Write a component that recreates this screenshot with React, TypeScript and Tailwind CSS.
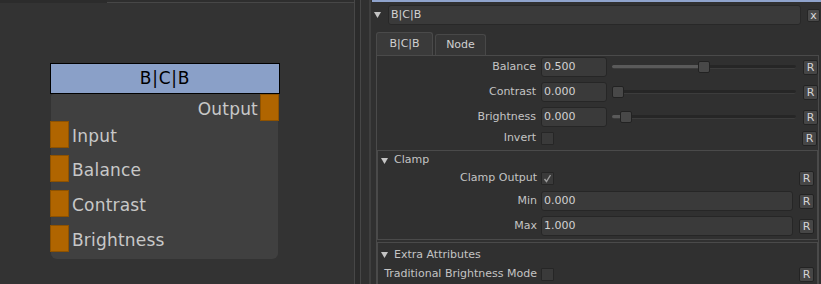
import React from "react";

const Tri = () => (
  <svg width="7" height="6" viewBox="0 0 7 6" className="shrink-0">
    <polygon points="0,0 7,0 3.5,6" fill="#c4c4c4" />
  </svg>
);

const RBtn = () => (
  <div className="w-[15px] h-[15px] shrink-0 rounded-[2px] bg-[#464646] border border-[#232323] flex items-center justify-center text-[11px] leading-none text-[#d4d4d4]">
    R
  </div>
);

const Field = ({ value, w }: { value: string; w: string }) => (
  <div
    className={`${w} h-[20px] shrink-0 bg-[#3a3a3a] border border-[#262626] rounded-[3px] flex items-center pl-[2px] text-[11px] text-[#d2d2d2]`}
  >
    {value}
  </div>
);

const Check = ({ checked = false }: { checked?: boolean }) => (
  <div className="w-[13px] h-[13px] shrink-0 bg-[#3a3a3a] border border-[#262626] rounded-[1px] flex items-center justify-center">
    {checked && (
      <svg width="9" height="9" viewBox="0 0 9 9">
        <path d="M1.5 5 L3.5 7.5 L7.5 1" stroke="#9c9c9c" strokeWidth="1.4" fill="none" />
      </svg>
    )}
  </div>
);

const Slider = ({ pos }: { pos: number }) => (
  <div className="relative w-[184px] h-[12px] ml-[5px] shrink-0">
    <div className="absolute left-0 right-0 top-[4px] h-[4px] rounded-full bg-[#262626] border-b border-[#3c3c3c]" />
    <div className="absolute left-0 top-[4px] h-[3px] rounded-l-full bg-[#5a5a5a]" style={{ width: pos }} />
    <div
      className="absolute top-0 w-[12px] h-[12px] rounded-[2px] bg-[#484848] border border-[#222222]"
      style={{ left: pos }}
    />
  </div>
);

const SliderRow = ({ label, value, pos, mt }: { label: string; value: string; pos: number; mt: string }) => (
  <div className={`flex items-center h-[20px] ${mt}`}>
    <div className="w-[159px] text-right text-[11px] text-[#c4c4c4] shrink-0">{label}</div>
    <div className="ml-[5px]">
      <Field value={value} w="w-[66px]" />
    </div>
    <Slider pos={pos} />
    <div className="ml-[7px]">
      <RBtn />
    </div>
  </div>
);

const Port = ({ extra = "" }: { extra?: string }) => (
  <div className={`w-[19px] h-[27px] shrink-0 bg-[#b06500] border border-[#8e5200] ${extra}`} />
);

const InRow = ({ label, mt }: { label: string; mt: string }) => (
  <div className={`flex items-center h-[27px] ${mt}`}>
    <Port extra="-ml-[1px]" />
    <span className="ml-[3px] pt-[4px] text-[17px] tracking-[0.2px] text-[#c8c8c8] leading-none">{label}</span>
  </div>
);

export default function App() {
  return (
    <div className="w-[821px] h-[284px] flex overflow-hidden bg-[#333333] font-['DejaVu_Sans',sans-serif]">
      {/* Node graph canvas */}
      <div className="w-[354px] h-full shrink-0 relative bg-[#333333] flex flex-col">
        <div className="flex h-[3px] shrink-0">
          <div className="w-[107px] bg-[#2c2c2c]" />
          <div className="flex-1 bg-[#2e2e2e] border-b border-[#474747]" />
        </div>
        <div className="absolute left-[50px] top-[63px] w-[230px] flex flex-col">
          <div className="h-[31px] bg-[#8aa0c8] border border-black flex items-center justify-center text-[17px] tracking-[0.8px] text-black">
            B|C|B
          </div>
          <div className="ml-[1px] w-[227px] h-[165px] bg-[#404040] rounded-b-[6px] rounded-t-[3px] flex flex-col">
            <div className="flex items-center justify-end h-[27px]">
              <span className="pt-[3px] text-[17px] tracking-[0.2px] text-[#c8c8c8] leading-none">Output</span>
              <Port extra="ml-[2px] -mr-[1px]" />
            </div>
            <InRow label="Input" mt="mt-0" />
            <InRow label="Balance" mt="mt-[7px]" />
            <InRow label="Contrast" mt="mt-[8px]" />
            <InRow label="Brightness" mt="mt-[8px]" />
          </div>
        </div>
      </div>

      {/* Divider */}
      <div className="w-[1px] h-full bg-[#474747] shrink-0" />
      <div className="w-[5px] h-full bg-[#2b2b2b] shrink-0" />
      <div className="w-[1px] h-full bg-[#474747] shrink-0" />
      <div className="w-[8px] h-full bg-[#303030] shrink-0" />
      <div className="w-[2px] h-full bg-[#3f3f3f] shrink-0" />

      {/* Properties panel */}
      <div className="flex-1 h-full bg-[#303030] flex flex-col">
        <div className="h-[2px] ml-[1px] bg-[#8fa3cc] shrink-0" />
        <div className="flex items-center mt-[3px] h-[20px] pl-[3px] shrink-0">
          <Tri />
          <div className="ml-[7px] w-[413px] h-[20px] bg-[#3a3a3a] border border-[#282828] rounded-[3px] flex items-center pl-[2px] text-[11px] text-[#d2d2d2]">
            B|C|B
          </div>
          <div className="ml-[6px] w-[13px] h-[13px] bg-[#4a4a4a] border border-[#262626] rounded-[2px] flex items-center justify-center text-[11px] leading-none text-[#dcdcdc]">
            x
          </div>
        </div>

        {/* Tabs */}
        <div className="flex items-end mt-[7px] ml-[5px] h-[23px] shrink-0">
          <div className="w-[57px] h-[23px] bg-[#3a3a3a] border border-b-0 border-[#4a4a4a] rounded-t-[3px] flex items-center justify-center text-[11px] text-[#d0d0d0]">
            B|C|B
          </div>
          <div className="ml-[2px] w-[51px] h-[21px] bg-[#363636] border border-b-0 border-[#484848] rounded-t-[3px] flex items-center justify-center text-[11px] text-[#d0d0d0]">
            Node
          </div>
        </div>

        {/* Tab content frame */}
        <div className="ml-[5px] w-[443px] flex-1 border border-b-0 border-[#4a4a4a] flex flex-col">
          <SliderRow label="Balance" value="0.500" pos={86} mt="mt-[1px]" />
          <SliderRow label="Contrast" value="0.000" pos={0} mt="mt-[5px]" />
          <SliderRow label="Brightness" value="0.000" pos={8} mt="mt-[5px]" />
          <div className="flex items-center h-[15px] mt-[4px]">
            <div className="w-[159px] text-right text-[11px] text-[#c4c4c4] shrink-0">Invert</div>
            <div className="ml-[5px]">
              <Check />
            </div>
            <div className="ml-auto mr-[1px]">
              <RBtn />
            </div>
          </div>

          {/* Clamp group */}
          <div className="mt-[4px] border border-[#4a4a4a] pb-[3px] flex flex-col">
            <div className="flex items-center h-[19px] pl-[3px]">
              <Tri />
              <span className="ml-[6px] text-[11px] text-[#c4c4c4]">Clamp</span>
            </div>
            <div className="flex items-center h-[14px] mt-[1px]">
              <div className="w-[159px] text-right text-[11px] text-[#c4c4c4] shrink-0">Clamp Output</div>
              <div className="ml-[4px]">
                <Check checked />
              </div>
              <div className="ml-auto mr-[3px]">
                <RBtn />
              </div>
            </div>
            <div className="flex items-center h-[20px] mt-[6px]">
              <div className="w-[159px] text-right text-[11px] text-[#c4c4c4] shrink-0">Min</div>
              <div className="ml-[4px]">
                <Field value="0.000" w="w-[252px]" />
              </div>
              <div className="ml-[6px]">
                <RBtn />
              </div>
            </div>
            <div className="flex items-center h-[20px] mt-[5px]">
              <div className="w-[159px] text-right text-[11px] text-[#c4c4c4] shrink-0">Max</div>
              <div className="ml-[4px]">
                <Field value="1.000" w="w-[252px]" />
              </div>
              <div className="ml-[6px]">
                <RBtn />
              </div>
            </div>
          </div>

          {/* Extra Attributes group */}
          <div className="mt-[2px] flex-1 border border-b-0 border-[#4a4a4a] flex flex-col">
            <div className="flex items-center h-[21px] pt-[3px] pl-[3px]">
              <Tri />
              <span className="ml-[6px] text-[11px] text-[#c4c4c4]">Extra Attributes</span>
            </div>
            <div className="flex items-center h-[15px] mt-[3px]">
              <div className="w-[159px] text-right text-[11px] text-[#c4c4c4] shrink-0 whitespace-nowrap">
                Traditional Brightness Mode
              </div>
              <div className="ml-[4px]">
                <Check />
              </div>
              <div className="ml-auto mr-[3px]">
                <RBtn />
              </div>
            </div>
          </div>
        </div>
      </div>
    </div>
  );
}
